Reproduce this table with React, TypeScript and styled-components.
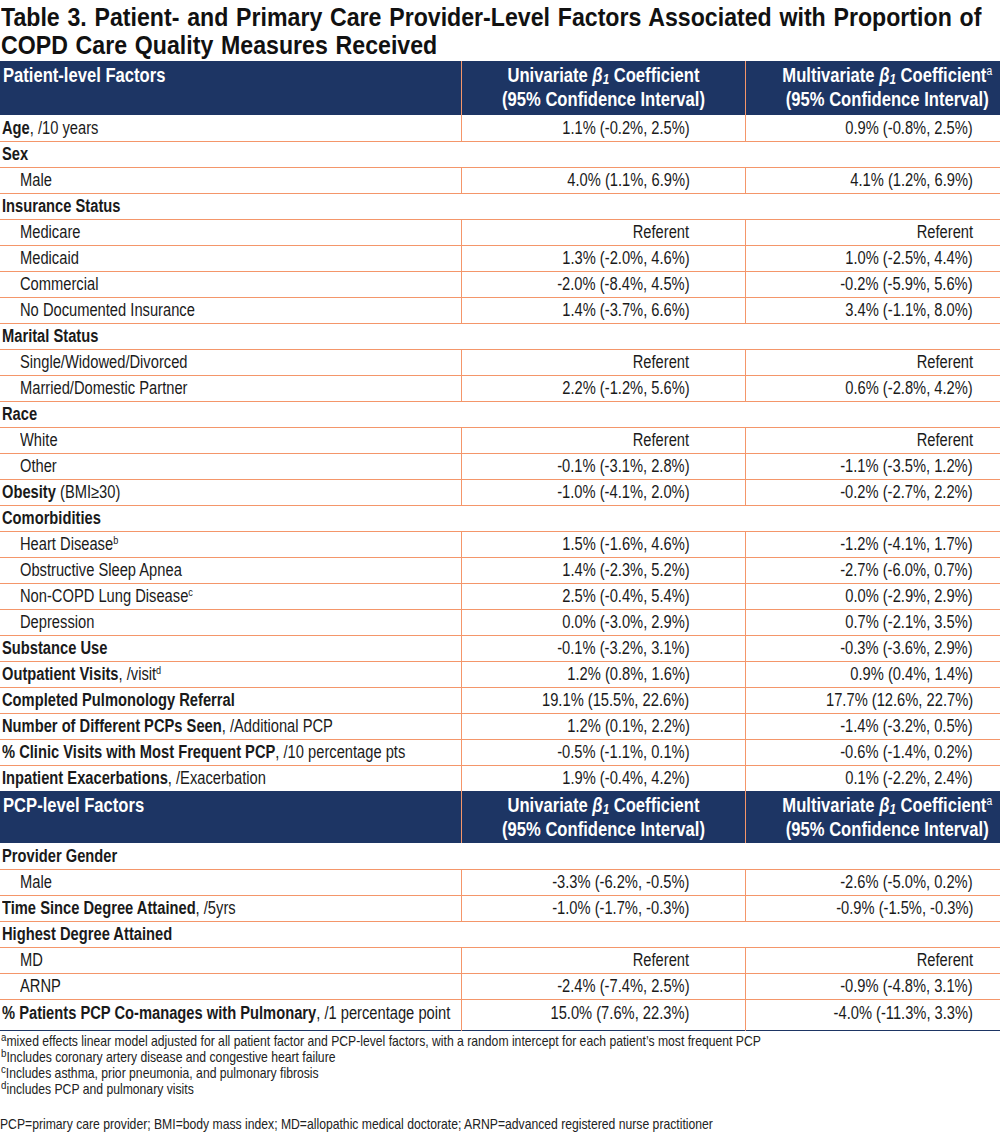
import React from "react";
import styled, { createGlobalStyle } from "styled-components";

const GlobalStyle = createGlobalStyle`
  html, body { margin: 0; padding: 0; background: #ffffff; }
  body { font-family: "Liberation Sans", Arial, sans-serif; color: #1a1a1a; }
`;

const NAVY = "#1d3564";
const ORANGE = "#f4966a";

/* Arial-Narrow look: Liberation Sans (Arial metrics) condensed horizontally */
const Narrow = styled.span<{ $origin?: string; $block?: boolean; $scale?: number }>`
  display: ${(p) => (p.$block ? "block" : "inline-block")};
  white-space: nowrap;
  transform: scaleX(${(p) => p.$scale ?? 0.84});
  transform-origin: ${(p) => p.$origin || "left"} center;
`;

const Page = styled.div`
  width: 1000px;
  display: flex;
  flex-direction: column;
  overflow: hidden;
`;

const Title = styled.h1`
  margin: 0;
  padding: 3px 0 0 1px;
  font-size: 26px;
  line-height: 28px;
  font-weight: 700;
  word-spacing: 1.5px;
  color: #111;
  height: 61px;
  box-sizing: border-box;
`;

const Table = styled.table`
  width: 1028px;
  flex: none;
  border-collapse: collapse;
  table-layout: fixed;
`;

const HeadRow = styled.tr<{ $h: number }>`
  background: ${NAVY};
  height: ${(p) => p.$h}px;
`;

const HeadCell = styled.th<{ $align?: string }>`
  color: #fff;
  font-size: 20px;
  line-height: 24px;
  font-weight: 700;
  vertical-align: top;
  padding: 2px 3px 2px 3px;
  text-align: ${(p) => p.$align || "center"};
  & + & { border-left: 1.5px solid ${ORANGE}; }
`;

const Beta = styled.span`
  font-style: italic;
  sub { font-size: 0.7em; vertical-align: -0.15em; line-height: 0; }
`;

const Sup = styled.sup`
  font-size: 0.62em;
  line-height: 0;
  vertical-align: 0.55em;
  font-weight: 400;
`;

type Edge = "orange" | "none" | "navy";

const Row = styled.tr<{ $edge?: Edge; $tall?: boolean }>`
  height: ${(p) => (p.$tall ? "31px" : "26px")};
  border-bottom: ${(p) =>
    p.$edge === "none" ? "none" : p.$edge === "navy" ? `1px solid ${NAVY}` : `1.5px solid ${ORANGE}`};
  & > td {
    vertical-align: ${(p) => (p.$tall ? "top" : "middle")};
    padding-top: ${(p) => (p.$tall ? "2px" : "0")};
  }
`;

const LabelCell = styled.td<{ $indent?: boolean }>`
  font-size: 17.5px;
  line-height: 22px;
  padding: 0 0 0 ${(p) => (p.$indent ? "20px" : "2px")};
  white-space: nowrap;
  b { font-weight: 700; }
`;

const ValueCell = styled.td`
  font-size: 17.5px;
  line-height: 22px;
  text-align: right;
  padding: 0 55px 0 0;
  border-left: 1.5px solid ${ORANGE};
  white-space: nowrap;
`;

const CategoryCell = styled.td`
  font-size: 17.5px;
  line-height: 22px;
  font-weight: 700;
  padding: 0 0 0 2px;
`;

const Notes = styled.div`
  padding: 2px 0 0 0;
  font-size: 14.5px;
  line-height: 16.3px;
  color: #222;
  display: flex;
  flex-direction: column;
`;

const NoteLine = styled.div`
  padding-left: 1px;
  sup { font-size: 0.8em; line-height: 0; vertical-align: 0.4em; }
`;

const Abbrev = styled.div`
  margin-top: 18px;
`;

type DataRow =
  | { kind: "cat"; label: string }
  | {
      kind: "row";
      label: string;
      bold?: boolean;
      suffix?: string;
      sup?: string;
      indent?: boolean;
      u: string;
      m: string;
      edge?: Edge;
      tall?: boolean;
    };

const patientRows: DataRow[] = [
  { kind: "row", label: "Age", bold: true, suffix: ", /10 years", u: "1.1% (-0.2%, 2.5%)", m: "0.9% (-0.8%, 2.5%)" },
  { kind: "cat", label: "Sex" },
  { kind: "row", label: "Male", indent: true, u: "4.0% (1.1%, 6.9%)", m: "4.1% (1.2%, 6.9%)" },
  { kind: "cat", label: "Insurance Status" },
  { kind: "row", label: "Medicare", indent: true, u: "Referent", m: "Referent" },
  { kind: "row", label: "Medicaid", indent: true, u: "1.3% (-2.0%, 4.6%)", m: "1.0% (-2.5%, 4.4%)" },
  { kind: "row", label: "Commercial", indent: true, u: "-2.0% (-8.4%, 4.5%)", m: "-0.2% (-5.9%, 5.6%)" },
  { kind: "row", label: "No Documented Insurance", indent: true, u: "1.4% (-3.7%, 6.6%)", m: "3.4% (-1.1%, 8.0%)" },
  { kind: "cat", label: "Marital Status" },
  { kind: "row", label: "Single/Widowed/Divorced", indent: true, u: "Referent", m: "Referent" },
  { kind: "row", label: "Married/Domestic Partner", indent: true, u: "2.2% (-1.2%, 5.6%)", m: "0.6% (-2.8%, 4.2%)" },
  { kind: "cat", label: "Race" },
  { kind: "row", label: "White", indent: true, u: "Referent", m: "Referent" },
  { kind: "row", label: "Other", indent: true, u: "-0.1% (-3.1%, 2.8%)", m: "-1.1% (-3.5%, 1.2%)" },
  { kind: "row", label: "Obesity", bold: true, suffix: " (BMI\u226530)", u: "-1.0% (-4.1%, 2.0%)", m: "-0.2% (-2.7%, 2.2%)" },
  { kind: "cat", label: "Comorbidities" },
  { kind: "row", label: "Heart Disease", sup: "b", indent: true, u: "1.5% (-1.6%, 4.6%)", m: "-1.2% (-4.1%, 1.7%)" },
  { kind: "row", label: "Obstructive Sleep Apnea", indent: true, u: "1.4% (-2.3%, 5.2%)", m: "-2.7% (-6.0%, 0.7%)" },
  { kind: "row", label: "Non-COPD Lung Disease", sup: "c", indent: true, u: "2.5% (-0.4%, 5.4%)", m: "0.0% (-2.9%, 2.9%)" },
  { kind: "row", label: "Depression", indent: true, u: "0.0% (-3.0%, 2.9%)", m: "0.7% (-2.1%, 3.5%)" },
  { kind: "row", label: "Substance Use", bold: true, u: "-0.1% (-3.2%, 3.1%)", m: "-0.3% (-3.6%, 2.9%)" },
  { kind: "row", label: "Outpatient Visits", bold: true, suffix: ", /visit", sup: "d", u: "1.2% (0.8%, 1.6%)", m: "0.9% (0.4%, 1.4%)" },
  { kind: "row", label: "Completed Pulmonology Referral", bold: true, u: "19.1% (15.5%, 22.6%)", m: "17.7% (12.6%, 22.7%)" },
  { kind: "row", label: "Number of Different PCPs Seen", bold: true, suffix: ", /Additional PCP", u: "1.2% (0.1%, 2.2%)", m: "-1.4% (-3.2%, 0.5%)" },
  { kind: "row", label: "% Clinic Visits with Most Frequent PCP", bold: true, suffix: ", /10 percentage pts", u: "-0.5% (-1.1%, 0.1%)", m: "-0.6% (-1.4%, 0.2%)" },
  { kind: "row", label: "Inpatient Exacerbations", bold: true, suffix: ", /Exacerbation", u: "1.9% (-0.4%, 4.2%)", m: "0.1% (-2.2%, 2.4%)", edge: "none" },
];

const pcpRows: DataRow[] = [
  { kind: "cat", label: "Provider Gender" },
  { kind: "row", label: "Male", indent: true, u: "-3.3% (-6.2%, -0.5%)", m: "-2.6% (-5.0%, 0.2%)" },
  { kind: "row", label: "Time Since Degree Attained", bold: true, suffix: ", /5yrs", u: "-1.0% (-1.7%, -0.3%)", m: "-0.9% (-1.5%, -0.3%)" },
  { kind: "cat", label: "Highest Degree Attained" },
  { kind: "row", label: "MD", indent: true, u: "Referent", m: "Referent" },
  { kind: "row", label: "ARNP", indent: true, u: "-2.4% (-7.4%, 2.5%)", m: "-0.9% (-4.8%, 3.1%)" },
  { kind: "row", label: "% Patients PCP Co-manages with Pulmonary", bold: true, suffix: ", /1 percentage point", u: "15.0% (7.6%, 22.3%)", m: "-4.0% (-11.3%, 3.3%)", edge: "navy", tall: true },
];

const HeaderRow: React.FC<{ label: string; height: number }> = ({ label, height }) => (
  <HeadRow $h={height}>
    <HeadCell $align="left">
      <Narrow $block $scale={0.83}>{label}</Narrow>
    </HeadCell>
    <HeadCell>
      <Narrow $block $origin="center" $scale={0.83}>
        Univariate <Beta>β<sub>1</sub></Beta> Coefficient
      </Narrow>
      <Narrow $block $origin="center" $scale={0.83}>(95% Confidence Interval)</Narrow>
    </HeadCell>
    <HeadCell>
      <Narrow $block $origin="center" $scale={0.83}>
        Multivariate <Beta>β<sub>1</sub></Beta> Coefficient<Sup>a</Sup>
      </Narrow>
      <Narrow $block $origin="center" $scale={0.83}>(95% Confidence Interval)</Narrow>
    </HeadCell>
  </HeadRow>
);

const renderRows = (rows: DataRow[]) =>
  rows.map((r, i) =>
    r.kind === "cat" ? (
      <Row key={i}>
        <CategoryCell colSpan={3}>
          <Narrow>{r.label}</Narrow>
        </CategoryCell>
      </Row>
    ) : (
      <Row key={i} $edge={r.edge} $tall={r.tall}>
        <LabelCell $indent={r.indent}>
          <Narrow>
            {r.bold ? <b>{r.label}</b> : r.label}
            {r.suffix}
            {r.sup && <Sup>{r.sup}</Sup>}
          </Narrow>
        </LabelCell>
        <ValueCell>
          <Narrow $origin="right">{r.u}</Narrow>
        </ValueCell>
        <ValueCell>
          <Narrow $origin="right">{r.m}</Narrow>
        </ValueCell>
      </Row>
    )
  );

export default function App() {
  return (
    <Page>
      <GlobalStyle />
      <Title>
        <Narrow $block $scale={0.89}>
          Table 3. Patient- and Primary Care Provider-Level Factors Associated with Proportion of
        </Narrow>
        <Narrow $block $scale={0.89}>COPD Care Quality Measures Received</Narrow>
      </Title>
      <Table>
        <colgroup>
          <col style={{ width: 461 }} />
          <col style={{ width: 284 }} />
          <col style={{ width: 283 }} />
        </colgroup>
        <tbody>
          <HeaderRow label="Patient-level Factors" height={54} />
          {renderRows(patientRows)}
          <HeaderRow label="PCP-level Factors" height={52} />
          {renderRows(pcpRows)}
        </tbody>
      </Table>
      <Notes>
        <NoteLine>
          <Narrow $scale={0.84}>
            <sup>a</sup>mixed effects linear model adjusted for all patient factor and PCP-level factors, with a random intercept for each patient’s most frequent PCP
          </Narrow>
        </NoteLine>
        <NoteLine>
          <Narrow $scale={0.84}>
            <sup>b</sup>Includes coronary artery disease and congestive heart failure
          </Narrow>
        </NoteLine>
        <NoteLine>
          <Narrow $scale={0.84}>
            <sup>c</sup>Includes asthma, prior pneumonia, and pulmonary fibrosis
          </Narrow>
        </NoteLine>
        <NoteLine>
          <Narrow $scale={0.84}>
            <sup>d</sup>includes PCP and pulmonary visits
          </Narrow>
        </NoteLine>
        <Abbrev>
          <Narrow $scale={0.84}>
            PCP=primary care provider; BMI=body mass index; MD=allopathic medical doctorate; ARNP=advanced registered nurse practitioner
          </Narrow>
        </Abbrev>
      </Notes>
    </Page>
  );
}
